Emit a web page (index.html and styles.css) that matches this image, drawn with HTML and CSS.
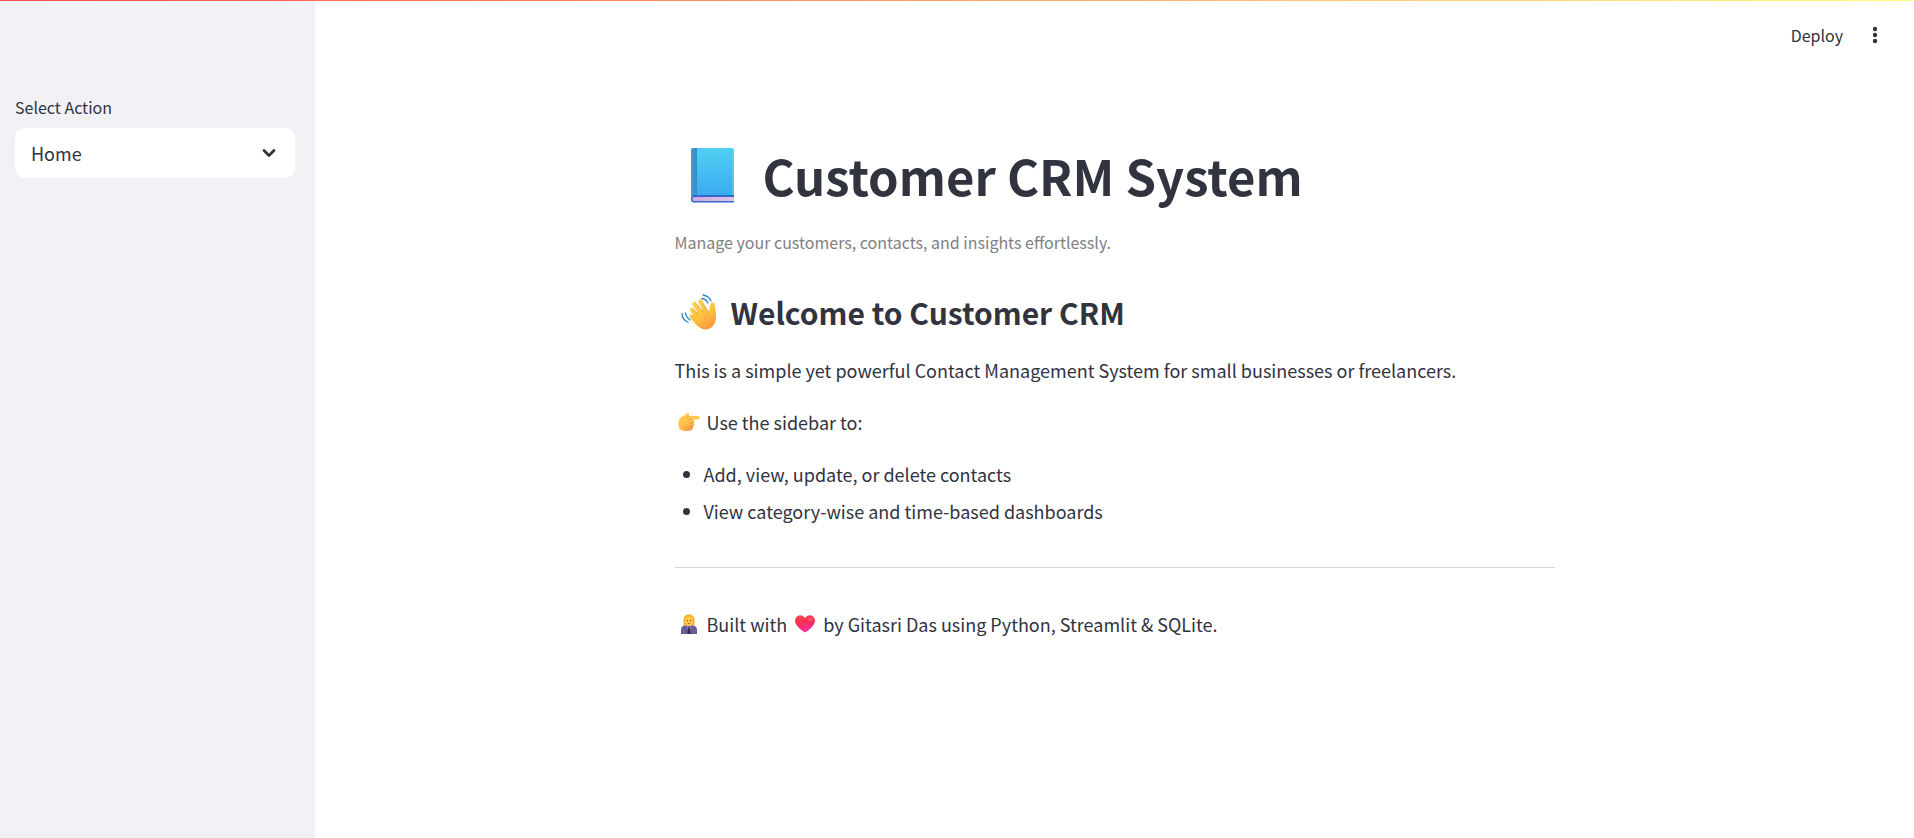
FILE: index.html
```html
<!DOCTYPE html>
<html lang="en">
<head>
<meta charset="utf-8">
<title>Customer CRM System</title>
<link rel="stylesheet" href="styles.css">
</head>
<body>
<div class="decoration"></div>
<div class="app">
  <aside class="sidebar">
    <label class="field-label" for="action">Select Action</label>
    <div class="select-box">
      <select id="action" class="select">
        <option selected>Home</option>
      </select>
      <svg class="chevron" viewBox="0 0 14 14" aria-hidden="true"><path d="M2 4.5 7 9.5 12 4.5"/></svg>
    </div>
  </aside>
  <div class="main">
    <header class="toolbar">
      <button class="deploy" type="button">Deploy</button>
      <button class="menu" type="button" aria-label="Main menu">
        <svg class="dots" viewBox="0 0 6 18" aria-hidden="true"><circle cx="3" cy="3" r="2.2"/><circle cx="3" cy="9" r="2.2"/><circle cx="3" cy="15" r="2.2"/></svg>
      </button>
    </header>
    <main class="content">
      <h1 class="title">
        <svg class="book" viewBox="0 0 43 55" aria-hidden="true">
          <defs>
            <linearGradient id="cover" x1="0" y1="0" x2="0" y2="1"><stop offset="0" stop-color="#50d0f3"/><stop offset="1" stop-color="#3babf0"/></linearGradient>
            <linearGradient id="spine" x1="0" y1="0" x2="1" y2="0"><stop offset="0" stop-color="#4b9bd0"/><stop offset="1" stop-color="#3589c8"/></linearGradient>
            <linearGradient id="pages" x1="0" y1="0" x2="1" y2="0"><stop offset="0" stop-color="#cda9dc"/><stop offset="1" stop-color="#dcc6ec"/></linearGradient>
          </defs>
          <path d="M2 0H41a2 2 0 0 1 2 2V47H0V2a2 2 0 0 1 2-2z" fill="url(#cover)"/>
          <path d="M2 0H6V48H0V2a2 2 0 0 1 2-2z" fill="url(#spine)"/>
          <path d="M42 1V47" stroke="#65d5f2" stroke-width="1"/>
          <path d="M3 47H43V54.5H3a3 3 0 0 1-3-3V49.500a3 3 0 0 1 3-2.500z" fill="#3767cb"/>
          <path d="M3 49H43V53H3a1.500 1.500 0 0 1-1.500-1.500V50.500A1.500 1.500 0 0 1 3 49z" fill="url(#pages)"/>
        </svg>
        <span>Customer CRM System</span>
      </h1>
      <p class="subtitle">Manage your customers, contacts, and insights effortlessly.</p>
      <h2 class="heading">
        <svg class="wave" viewBox="0 0 36 36" aria-hidden="true">
          <defs><linearGradient id="skin" x1="0" y1="0" x2=".6" y2="1"><stop offset="0" stop-color="#ffd052"/><stop offset=".6" stop-color="#ffc040"/><stop offset="1" stop-color="#f59a3b"/></linearGradient></defs>
          <path d="M10.500 22.500 17 30" stroke="#ffc847" stroke-width="4" stroke-linecap="round"/>
          <path d="M11 16 18 25M13.500 10 21 21M19.500 7.500 25 18" stroke="#ffcb4b" stroke-width="4.200" stroke-linecap="round"/>
          <path d="M11 22 15 18 24 14 29 17C28 13 29 8.500 32 8.500 34.500 9 33.500 12 34.500 16 35.500 21 35.500 28 32 32 28 36.500 21 36.500 17 32L9.500 24z" fill="url(#skin)"/>
          <path d="M12.500 15.500 17.500 21.500M16.500 11 22 18.500M22 10 25.500 16M27.500 20C25 21 24 23 24.500 25" fill="none" stroke="#e99635" stroke-width=".8" stroke-linecap="round"/>
          <path d="M21 4.500Q25 5 27 9M22 1Q28 2 30 7M4.500 19Q5 23 9 26M1 19.500Q1 26 7 28" fill="none" stroke="#2a87c8" stroke-width="1.300" stroke-linecap="round"/>
        </svg>
        <span>Welcome to Customer CRM</span>
      </h2>
      <p class="text">This is a simple yet powerful Contact Management System for small businesses or freelancers.</p>
      <p class="text line">
        <svg class="point" viewBox="0 0 22 20" aria-hidden="true">
          <defs><linearGradient id="hand" x1="0" y1="0" x2=".5" y2="1"><stop offset="0" stop-color="#ffd052"/><stop offset=".6" stop-color="#ffc24a"/><stop offset="1" stop-color="#f29440"/></linearGradient></defs>
          <path d="M1 8C2 5 5.500 4.500 7.500 2.300 9.500 0 11.800 1 11 3L10.500 4H20C22 4 22 7.200 20 7.200H14.500C17 7.500 17 10.500 15.500 11 16.800 12 16.200 14 14.800 14.500 15.500 16.500 14.200 18 12.500 18.500 9 19.500 3 19 1.500 16.500 0 14 0 10.500 1 8z" fill="url(#hand)"/>
          <path d="M15 7.500H10.500M15.500 11H11.500M14.800 14.500H11M10.500 4 8.500 6.500" stroke="#e58c32" stroke-width=".7" fill="none"/>
        </svg>
        <span>Use the sidebar to:</span>
      </p>
      <ul class="list">
        <li>Add, view, update, or delete contacts</li>
        <li>View category-wise and time-based dashboards</li>
      </ul>
      <hr class="rule">
      <p class="text line">
        <svg class="person" viewBox="0 0 16 20" aria-hidden="true">
          <path d="M8 .5C4 .5 2.500 3 2.500 6.500V11.500H13.500V6.500C13.500 3 12 .5 8 .5z" fill="#f9ac20"/>
          <path d="M0 20V15.500C0 13 2 11.500 5 11.500H11C14 11.500 16 13 16 15.500V20z" fill="#65599a"/>
          <path d="M6.300 11 8 13 9.700 11 9.300 15 8 17 6.700 15z" fill="#c9bfe0"/>
          <path d="M7.300 12.500H8.700L9.500 20H6.500z" fill="#362b50"/>
          <path d="M3 15V20M13 15V20" stroke="#8172b0" stroke-width=".8"/>
          <ellipse cx="8" cy="7" rx="4" ry="4.700" fill="#ffcf4d"/>
          <path d="M4 6C5 2.500 9 3 10 2L12 5 11 1.500H6L3.500 4z" fill="#ffb829"/>
          <circle cx="6.300" cy="6.800" r=".7" fill="#70462c"/><circle cx="9.700" cy="6.800" r=".7" fill="#70462c"/>
          <path d="M6.800 9.500H9.200" stroke="#c9542f" stroke-width=".9"/>
        </svg>
        <span>Built with</span>
        <svg class="heart" viewBox="0 0 20 18" aria-hidden="true">
          <defs><linearGradient id="love" x1="0" y1="0" x2=".2" y2="1"><stop offset="0" stop-color="#f8484e"/><stop offset=".5" stop-color="#f92d57"/><stop offset="1" stop-color="#f42fa4"/></linearGradient></defs>
          <path d="M10 3C8 0 4.500-.5 2.200 1.200-.5 3.200-.5 7 1.500 10 3.500 13 7 15.500 10 17.500 13 15.500 16.500 13 18.500 10 20.500 7 20.500 3.200 17.800 1.200 15.500-.5 12 0 10 3z" fill="url(#love)"/>
          <ellipse cx="15.500" cy="4.500" rx="2.500" ry="2" fill="#ff7277" opacity=".5"/>
        </svg>
        <span>by Gitasri Das using Python, Streamlit &amp; SQLite.</span>
      </p>
    </main>
  </div>
</div>
</body>
</html>
```
FILE: styles.css
```css
* { box-sizing: border-box; }

body {
  margin: 0;
  background: #fff;
  color: #31333f;
  font-family: "Noto Sans CJK SC", "Noto Sans", sans-serif;
  font-size: 18px;
  line-height: 32px;
}

.decoration {
  position: fixed;
  top: 0;
  left: 0;
  right: 0;
  height: 1px;
  background: linear-gradient(90deg, #ff4b4b, #fffd80);
}

.app { display: flex; min-height: 100vh; }

.sidebar {
  flex: 0 0 315px;
  padding: 91px 20px 20px 15px;
  background: #f0f2f6;
}

.field-label {
  display: block;
  margin-bottom: 5px;
  font-size: 16px;
}

.select-box { display: grid; align-items: center; }

.select {
  grid-area: 1 / 1;
  width: 100%;
  height: 50px;
  padding: 0 16px;
  border: 0;
  border-radius: 10px;
  background: #fff;
  color: inherit;
  font: inherit;
  appearance: none;
}

.chevron {
  grid-area: 1 / 1;
  justify-self: end;
  width: 14px;
  height: 14px;
  margin-right: 19px;
  fill: none;
  stroke: #31333f;
  stroke-width: 2.8;
  stroke-linecap: round;
  stroke-linejoin: round;
  pointer-events: none;
}

.main { flex: 1; min-width: 0; }

.toolbar {
  display: flex;
  align-items: center;
  justify-content: flex-end;
  gap: 20px;
  height: 70px;
  padding-right: 27px;
}

.deploy,
.menu {
  padding: 0;
  border: 0;
  background: none;
  color: inherit;
  font: inherit;
}

.deploy { font-size: 16px; }

.menu {
  display: flex;
  justify-content: center;
  width: 24px;
}

.dots { width: 6px; height: 18px; fill: #31333f; }

.content {
  max-width: 920px;
  margin: 0 auto;
  padding: 72px 20px 80px;
}

.title,
.heading,
.line { display: flex; align-items: center; }

.title {
  margin: 0;
  font-size: 49px;
  font-weight: 700;
  line-height: 66px;
}

.book { width: 43px; height: 55px; margin: 0 29px 0 16px; }

.subtitle {
  margin: 18px 0 0;
  color: #808080;
  font-size: 16px;
}

.heading {
  margin: 32px 0 0;
  font-size: 30px;
  font-weight: 600;
  line-height: 44px;
}

.wave { width: 36px; height: 36px; margin: 0 14px 0 6px; }

.text { margin: 20px 0 0; }

.point { width: 22px; height: 20px; margin: 0 7px 0 3px; }

.list {
  margin: 20px 0 0;
  padding-left: 29px;
}

.list li + li { margin-top: 5px; }

.rule {
  height: 1px;
  margin: 40px 0;
  border: 0;
  background: #d6d6d8;
}

.person { width: 16px; height: 20px; margin: 0 10px 0 6px; }

.heart { width: 20px; height: 18px; margin: 0 8px; }
```
